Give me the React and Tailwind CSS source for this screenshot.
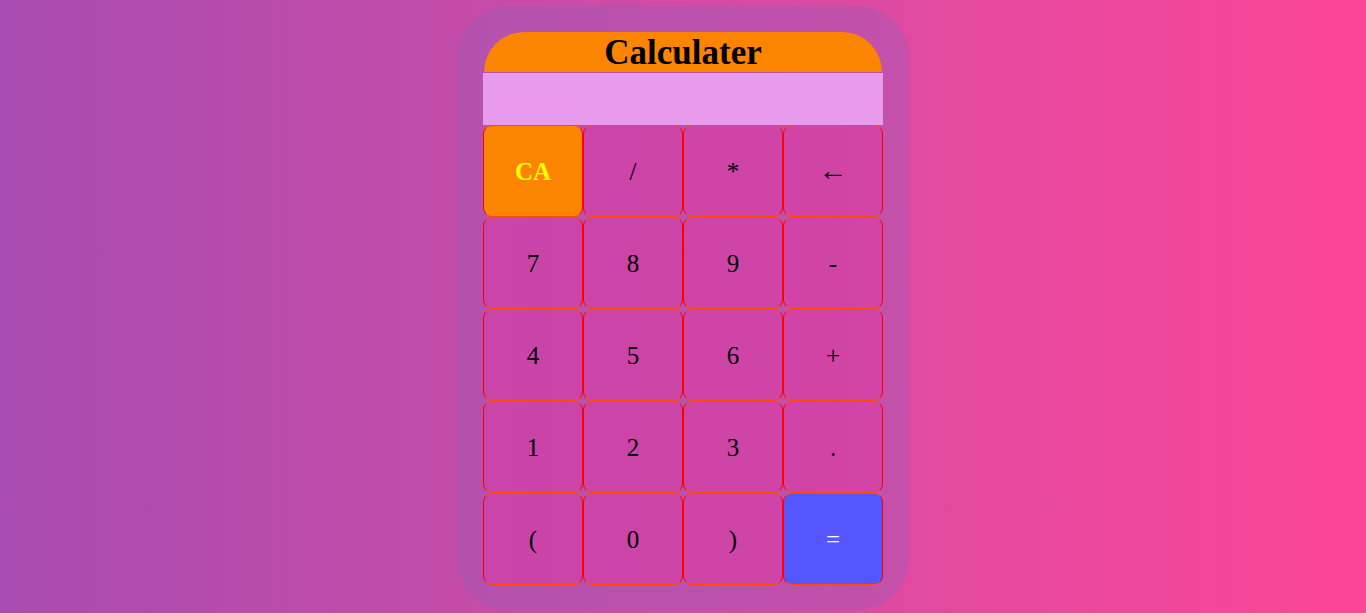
const keys = [
  { label: "CA", cls: "bg-[#fb8500] text-[#ffff00] font-bold border-[#ff6a00]" },
  { label: "/" },
  { label: "*" },
  { label: "←", cls: "bg-[#f02d9e]/35 text-black text-[29px] pb-[2px]" },
  { label: "7" },
  { label: "8" },
  { label: "9" },
  { label: "-" },
  { label: "4" },
  { label: "5" },
  { label: "6" },
  { label: "+" },
  { label: "1" },
  { label: "2" },
  { label: "3" },
  { label: "." },
  { label: "(" },
  { label: "0" },
  { label: ")" },
  { label: "=", cls: "bg-[#5556ff] text-white" },
];

const App = () => {
  return (
    <div className="min-h-[613px] w-full bg-gradient-to-r from-[#a84bb0] to-[#fc4497] pt-[6px] font-['Liberation_Serif',serif]">
      <div className="mx-auto w-[452px] h-[604px] rounded-[52px] bg-[#9a5ab8]/40 px-[26px] pt-[26px]">
        {/* heading */}
        <div className="h-[40px] rounded-t-[40px] bg-[#fb8500] mx-px flex items-center justify-center">
          <h1 className="text-[35px] font-bold text-black leading-none">
            Calculater
          </h1>
        </div>
        <div className="mt-px h-[52px] bg-[#e89bec]"></div>
        {/* keypad */}
        <div className="grid grid-cols-4">
          {keys.map((k) => (
            <button
              key={k.label}
              className={`h-[92px] rounded-[9px] border border-x-[#ff0000] border-y-[#ff4a00] leading-none flex items-center justify-center ${
                k.cls || "bg-[#f02d9e]/35 text-black"
              } ${k.label === "←" ? "" : "text-[25px]"}`}
            >
              {k.label}
            </button>
          ))}
        </div>
      </div>
    </div>
  );
};

export default App;
